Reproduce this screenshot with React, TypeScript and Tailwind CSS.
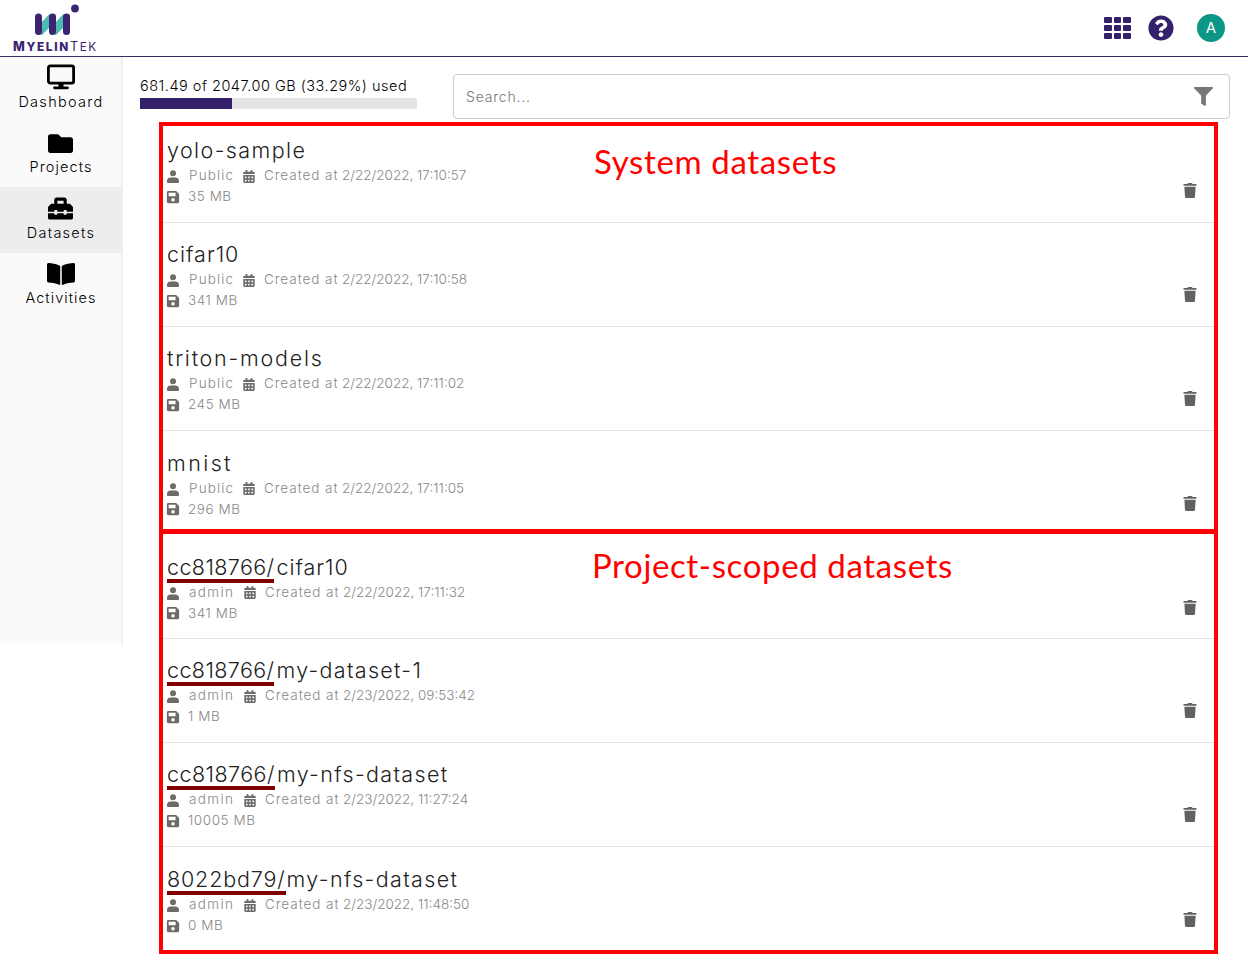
import type { ReactNode } from "react";
import { FaBookOpen, FaCalendarAlt, FaFilter, FaFolder, FaQuestionCircle, FaSave, FaToolbox, FaTrash } from "react-icons/fa";

type Dataset = {
  scope?: string;
  scopeTrack?: string;
  name: string;
  owner: string;
  created: string;
  size: string;
  row: string;
  track: string;
};

const systemDatasets: Dataset[] = [
  { name: "yolo-sample", owner: "Public", created: "2/22/2022, 17:10:57", size: "35 MB", row: "h-[97px] pt-[11px] border-b", track: "tracking-[1.4px]" },
  { name: "cifar10", owner: "Public", created: "2/22/2022, 17:10:58", size: "341 MB", row: "h-[104px] pt-[18px] border-b", track: "tracking-[1px]" },
  { name: "triton-models", owner: "Public", created: "2/22/2022, 17:11:02", size: "245 MB", row: "h-[104px] pt-[18px] border-b", track: "tracking-[1.75px]" },
  { name: "mnist", owner: "Public", created: "2/22/2022, 17:11:05", size: "296 MB", row: "h-[98px] pt-[18.500px]", track: "tracking-[2.4px]" },
];

const projectDatasets: Dataset[] = [
  { scope: "cc818766/", scopeTrack: "tracking-[0.4px]", name: "cifar10", owner: "admin", created: "2/22/2022, 17:11:32", size: "341 MB", row: "h-[105px] pt-[19.500px] border-b", track: "pl-[2px] tracking-[1px]" },
  { scope: "cc818766/", scopeTrack: "tracking-[0.4px]", name: "my-dataset-1", owner: "admin", created: "2/23/2022, 09:53:42", size: "1 MB", row: "h-[104px] pt-[18px] border-b", track: "pl-[2px] tracking-[1.3px]" },
  { scope: "cc818766/", scopeTrack: "tracking-[0.45px]", name: "my-nfs-dataset", owner: "admin", created: "2/23/2022, 11:27:24", size: "10005 MB", row: "h-[104px] pt-[18px] border-b", track: "pl-[2px] tracking-[1.35px]" },
  { scope: "8022bd79/", scopeTrack: "tracking-[0.85px]", name: "my-nfs-dataset", owner: "admin", created: "2/23/2022, 11:48:50", size: "0 MB", row: "h-[103px] pt-[19px]", track: "pl-px tracking-[1.35px]" },
];

function LogoMark() {
  return (
    <svg className="h-9 w-[49px]" viewBox="0 0 49 36">
      <path d="M7.500 21.500 18.500 10h6v7.500L10.500 31.500zM21.500 21.500 32.500 10h6v7.500L24.500 31.500z" fill="#4dbdb3" />
      <path d="M7.500 13v14.500M21.500 13v14.500M35.500 13v14.500" stroke="#3b2470" strokeWidth="7" strokeLinecap="round" />
      <circle cx="44" cy="4.500" r="3.900" fill="#3b2470" />
    </svg>
  );
}

function MonitorIcon() {
  return (
    <svg className="h-[26px] w-7" viewBox="0 0 28 26" fill="none">
      <rect x="1.400" y="1.900" width="25.200" height="17.200" rx="1.800" stroke="currentColor" strokeWidth="2.800" />
      <path d="M11.500 19h5v3.500h4a1.200 1.200 0 0 1 0 2.700h-13a1.200 1.200 0 0 1 0-2.700h4z" fill="currentColor" />
    </svg>
  );
}

function PersonIcon() {
  return (
    <svg className="mt-0.5 mr-[9px] h-[13px] w-3 text-[#6b6b6b]" viewBox="0 0 12 13" fill="currentColor">
      <circle cx="6" cy="3.200" r="3" />
      <path d="M3.500 7.500h5C10.600 7.500 12 9 12 11v1c0 .6-.4 1-1 1H1c-.6 0-1-.4-1-1v-1c0-2 1.400-3.500 3.500-3.500z" />
    </svg>
  );
}

function NavItem({ icon, label, active, track }: { icon: ReactNode; label: string; active?: boolean; track: string }) {
  return (
    <a className={`flex h-[65.600px] flex-col items-center pt-1.5 text-black ${active ? "bg-[#ededed]" : ""}`}>
      <span className="flex h-[30.500px] items-center justify-center">{icon}</span>
      <span className={`pl-px text-[14.500px] leading-[18px] font-light ${track}`}>{label}</span>
    </a>
  );
}

function DatasetRow({ scope, scopeTrack, name, owner, created, size, row, track }: Dataset) {
  return (
    <div className={`flex items-start justify-between border-[#e4e4e4] ${row}`}>
      <div className="flex flex-col pl-1">
        <div className="flex h-7 text-[21.500px] leading-[27px] font-light text-[#222]">
          {scope && <span className={`h-[29px] border-b-4 border-[#800000] ${scopeTrack}`}>{scope}</span>}
          <span className={track}>{name}</span>
        </div>
        <div className="flex h-[21px] items-center text-[13.500px] leading-[21px] font-light text-[#888]">
          <PersonIcon />
          <span className={scope ? "w-14 pl-px tracking-[1.4px]" : "w-[55px] pl-px tracking-[1.15px]"}>{owner}</span>
          <FaCalendarAlt className="mt-px mr-[7px] -ml-px h-[13px] w-3.5 text-[#6b6b6b]" />
          <span className="w-[79px] pl-px tracking-[0.95px]">Created at</span>
          <span>{created}</span>
        </div>
        <div className="flex h-5 items-center text-[13.500px] leading-5 font-light tracking-[0.55px] text-[#888]">
          <FaSave className="mt-px mr-2 -ml-px size-3.5 text-[#6b6b6b]" />
          <span>{size}</span>
        </div>
      </div>
      <FaTrash className="mt-[46px] mr-[17px] h-[15px] w-3.5 text-[#616161]" />
    </div>
  );
}

export default function App() {
  return (
    <div className="h-[969px] w-[1248px] overflow-hidden bg-white font-['Inter','Liberation_Sans',sans-serif]">
      <header className="flex h-[57px] items-center justify-between border-b border-[#3b2a5e] pr-[23px] pl-[13px]">
        <div className="flex w-[85px] flex-col items-center pt-px">
          <LogoMark />
          <div className="text-[12.500px] leading-[14px] tracking-[1.65px] whitespace-nowrap text-[#3b2470]">
            <span className="font-extrabold">
              M<span className="text-[11.800px]">YELIN</span>
            </span>
            T<span className="text-[11.800px]">EK</span>
          </div>
        </div>
        <div className="flex items-center">
          <div className="mr-[17px] grid grid-cols-3 gap-x-[2px] gap-y-[2px]">
            {Array.from({ length: 9 }, (_, i) => (
              <span key={i} className="h-[6.300px] w-[7.700px] rounded-[1px] bg-[#35216b]" />
            ))}
          </div>
          <FaQuestionCircle className="mr-[23px] mb-px size-[26px] text-[#35216b]" />
          <span className="flex size-7 items-center justify-center rounded-full bg-[#0c9686] text-[15px] text-white">A</span>
        </div>
      </header>
      <div className="flex">
        <nav className="h-[587px] w-[123px] shrink-0 border-r-2 border-[#efefef] bg-[#fafafa]">
          <div className="-mt-[0.800px]">
            <NavItem label="Dashboard" track="tracking-[1.3px]" icon={<MonitorIcon />} />
            <NavItem label="Projects" track="tracking-[1.1px]" icon={<FaFolder className="size-[25px]" />} />
            <NavItem label="Datasets" track="tracking-[1.25px]" active icon={<FaToolbox className="size-[25px]" />} />
            <NavItem label="Activities" track="tracking-[1.05px]" icon={<FaBookOpen className="size-[28px]" />} />
          </div>
        </nav>
        <main className="min-w-0 flex-1">
          <div className="flex h-[65px] pt-[17px] pl-[17px]">
            <div className="w-[313px]">
              <div className="mt-[3px] h-[21px] text-[14.500px] leading-[18px] font-light tracking-[0.5px] whitespace-nowrap text-black">681.49 of 2047.00 GB (33.29%) used</div>
              <div className="h-[11px] w-[277px] bg-[#e4e4e4]">
                <div className="h-full w-1/3 bg-[#35216b]" />
              </div>
            </div>
            <div className="flex h-[45px] w-[777px] items-center justify-between rounded-[4px] border border-[#ccc] pr-4 pl-3 text-[14px] font-light text-[#757575]">
              <span className="tracking-[0.8px]">Search...</span>
              <FaFilter className="size-[19px] text-[#777]" />
            </div>
          </div>
          <div className="relative ml-9 w-[1059px]">
            <section className="h-[412px] border-x-4 border-t-4 border-b-[5px] border-[#f00]">
              {systemDatasets.map((d) => (
                <DatasetRow key={d.created} {...d} />
              ))}
            </section>
            <section className="h-[420px] border-x-4 border-b-4 border-[#f00]">
              {projectDatasets.map((d) => (
                <DatasetRow key={d.created} {...d} />
              ))}
            </section>
            <div className="absolute top-[19px] left-[435px] font-['Lato',sans-serif] text-[33px] leading-10 tracking-[0.65px] whitespace-nowrap text-[#f00]">System datasets</div>
            <div className="absolute top-[423px] left-[433px] font-['Lato',sans-serif] text-[33px] leading-10 tracking-[0.62px] whitespace-nowrap text-[#f00]">Project-scoped datasets</div>
          </div>
        </main>
      </div>
    </div>
  );
}
